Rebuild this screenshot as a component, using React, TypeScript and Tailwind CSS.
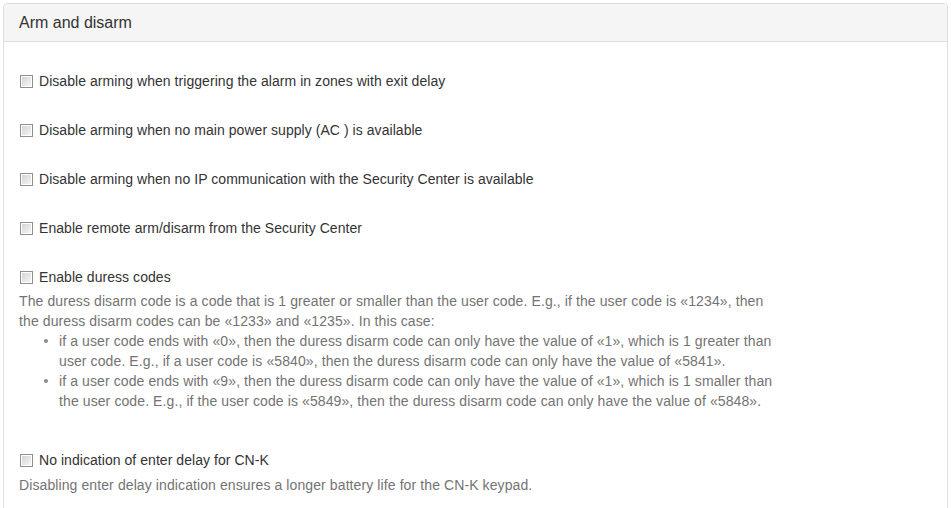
import React from 'react';

const Box: React.FC = () => (
  <span className="inline-block w-[13px] h-[13px] border border-[#8f8f8f] bg-white p-px shrink-0">
    <span className="block w-full h-full bg-gradient-to-br from-[#d4d4d4] to-[#f6f6f6]" />
  </span>
);

const Check: React.FC<{ label: string }> = ({ label }) => (
  <label className="flex items-center h-5 pl-px">
    <Box />
    <span className="ml-[6px] text-[#333333] tracking-[0.05px]">{label}</span>
  </label>
);

const Bullet: React.FC<{ children: React.ReactNode }> = ({ children }) => (
  <li className="flex">
    <span className="w-[15px] shrink-0 flex items-center h-5">
      <span className="block w-[4px] h-[4px] rounded-full bg-[#8a8a8a]" />
    </span>
    <span>{children}</span>
  </li>
);

export default function App() {
  return (
    <div className="w-[951px] h-[508px] overflow-hidden bg-white pt-[3px] pl-[3px] font-['Liberation_Sans',Arial,sans-serif] text-[14px] leading-5">
      <div className="w-[945px] h-[600px] border border-[#dddddd] rounded-t-[4px] bg-white">
        <div className="h-[38px] px-[15px] flex items-center bg-[#f5f5f5] border-b border-[#dddddd] rounded-t-[3px]">
          <h3 className="text-[16px] text-[#333333] leading-none">Arm and disarm</h3>
        </div>
        <div className="px-[15px] pt-[29px] flex flex-col">
          <div className="flex flex-col gap-[29px]">
            <Check label="Disable arming when triggering the alarm in zones with exit delay" />
            <Check label="Disable arming when no main power supply (AC ) is available" />
            <Check label="Disable arming when no IP communication with the Security Center is available" />
            <Check label="Enable remote arm/disarm from the Security Center" />
            <Check label="Enable duress codes" />
          </div>
          <div className="mt-1 text-[#737373] tracking-[0.1px] whitespace-nowrap">
            <p>
              The duress disarm code is a code that is 1 greater or smaller than the user code. E.g., if the user code is «1234», then
              <br />
              the duress disarm codes can be «1233» and «1235». In this case:
            </p>
            <ul className="pl-[25px]">
              <Bullet>
                if a user code ends with «0», then the duress disarm code can only have the value of «1», which is 1 greater than
                <br />
                user code. E.g., if a user code is «5840», then the duress disarm code can only have the value of «5841».
              </Bullet>
              <Bullet>
                if a user code ends with «9», then the duress disarm code can only have the value of «1», which is 1 smaller than
                <br />
                the user code. E.g., if the user code is «5849», then the duress disarm code can only have the value of «5848».
              </Bullet>
            </ul>
          </div>
          <div className="mt-[39px]">
            <Check label="No indication of enter delay for CN-K" />
          </div>
          <p className="mt-[5px] text-[#737373] tracking-[0.1px]">
            Disabling enter delay indication ensures a longer battery life for the CN-K keypad.
          </p>
        </div>
      </div>
    </div>
  );
}
